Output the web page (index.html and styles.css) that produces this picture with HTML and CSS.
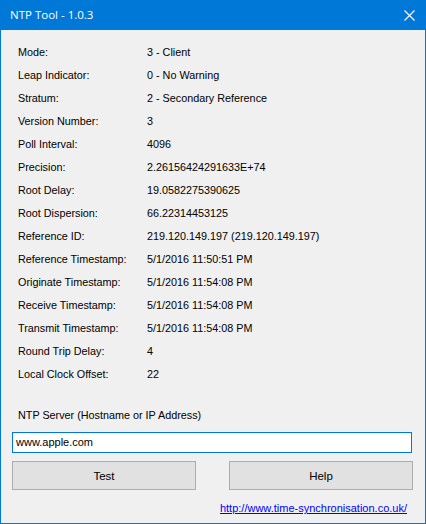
FILE: index.html
```html
<!DOCTYPE html>
<html>
<head>
<meta charset="utf-8">
<link rel="stylesheet" href="styles.css">
</head>
<body>
<div class="window">
  <div class="titlebar">
    <span class="title">NTP Tool - 1.0.3</span>
    <svg class="close" width="11" height="11" viewBox="0 0 11 11"><path d="M0.5 0.5 L10.5 10.5 M10.5 0.5 L0.5 10.5" stroke="#fff" stroke-width="1.1" fill="none"/></svg>
  </div>
  <div class="content">
    <div class="grid">
      <div>Mode:</div><div>3 - Client</div>
      <div>Leap Indicator:</div><div>0 - No Warning</div>
      <div>Stratum:</div><div>2 - Secondary Reference</div>
      <div>Version Number:</div><div>3</div>
      <div>Poll Interval:</div><div>4096</div>
      <div>Precision:</div><div>2.26156424291633E+74</div>
      <div>Root Delay:</div><div>19.0582275390625</div>
      <div>Root Dispersion:</div><div>66.22314453125</div>
      <div>Reference ID:</div><div>219.120.149.197 (219.120.149.197)</div>
      <div>Reference Timestamp:</div><div>5/1/2016 11:50:51 PM</div>
      <div>Originate Timestamp:</div><div>5/1/2016 11:54:08 PM</div>
      <div>Receive Timestamp:</div><div>5/1/2016 11:54:08 PM</div>
      <div>Transmit Timestamp:</div><div>5/1/2016 11:54:08 PM</div>
      <div>Round Trip Delay:</div><div>4</div>
      <div>Local Clock Offset:</div><div>22</div>
    </div>
    <div class="server-label">NTP Server (Hostname or IP Address)</div>
    <div class="input">www.apple.com</div>
    <div class="buttons">
      <div class="btn">Test</div>
      <div class="btn">Help</div>
    </div>
    <div class="linkrow"><a class="link" href="#">http://www.time-synchronisation.co.uk/</a></div>
  </div>
</div>
</body>
</html>
```
FILE: styles.css
```css
html, body {
  margin: 0;
  padding: 0;
}
body {
  font-family: "Liberation Sans", Arial, sans-serif;
  font-size: 10.8px;
  color: #000;
  background: #f0f0f0;
}
.window {
  width: 426px;
  height: 524px;
  box-sizing: border-box;
  background: #f0f0f0;
  border: 1px solid #0078d7;
  border-top: none;
  overflow: hidden;
}
.titlebar {
  height: 30px;
  margin: 0 -1px;
  background: #0078d7;
  display: flex;
  align-items: center;
  justify-content: space-between;
  padding: 0 11px 0 10px;
}
.title {
  color: #fff;
  font-family: "Open Sans", "Noto Sans", sans-serif;
  font-size: 11.5px;
  padding-bottom: 1px;
}
.close {
  display: block;
}
.content {
  padding-top: 10px;
}
.grid {
  display: grid;
  grid-template-columns: 129px auto;
  grid-auto-rows: 23px;
  align-items: center;
  padding-left: 17px;
}
.server-label {
  margin-top: 19px;
  height: 23px;
  line-height: 23px;
  padding-left: 17px;
}
.input {
  margin: 5px 0 0 11px;
  width: 400px;
  height: 21px;
  box-sizing: border-box;
  border: 1px solid #0078d7;
  background: #fff;
  padding-left: 3px;
  line-height: 19px;
  font-size: 11px;
}
.buttons {
  display: flex;
  gap: 33px;
  margin: 8px 0 0 11px;
}
.btn {
  width: 184px;
  height: 29px;
  box-sizing: border-box;
  background: #e1e1e1;
  border: 1px solid #adadad;
  display: flex;
  align-items: center;
  justify-content: center;
  font-size: 11.5px;
}
.linkrow {
  margin-top: 10px;
  display: flex;
  justify-content: flex-end;
  padding-right: 18px;
  line-height: 16px;
  font-size: 11px;
}
.link {
  color: #0000ff;
  text-decoration: underline;
}
```
